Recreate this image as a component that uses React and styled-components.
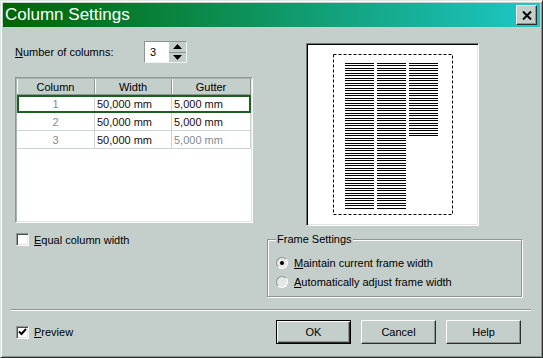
import React from "react";
import styled, { createGlobalStyle } from "styled-components";

const face = "#c4cecb";
const shadow = "#8c9693";
const dark = "#2b2f2e";

const GlobalStyle = createGlobalStyle`
  html, body {
    margin: 0;
    padding: 0;
    background: ${face};
  }
  body {
    font-family: "Liberation Sans", Arial, sans-serif;
    font-size: 11px;
    color: #000;
  }
`;

const Window = styled.div`
  width: 543px;
  height: 358px;
  box-sizing: border-box;
  background: ${face};
  border: 1px solid;
  border-color: #dfe6e3 ${dark} ${dark} #dfe6e3;
  box-shadow: inset 1px 1px 0 #fff, inset -1px -1px 0 ${shadow};
  padding: 2px;
  display: flex;
  flex-direction: column;
`;

const TitleBar = styled.div`
  height: 24px;
  flex: none;
  display: flex;
  align-items: center;
  justify-content: space-between;
  padding: 0 3px 0 2px;
  background: linear-gradient(90deg, #006400 0%, #1ec8c8 100%);
`;

const Title = styled.span`
  color: #fff;
  font-size: 17px;
  line-height: 24px;
`;

const CloseButton = styled.div`
  width: 21px;
  height: 20px;
  box-sizing: border-box;
  background: ${face};
  border: 1px solid;
  border-color: #fff ${dark} ${dark} #fff;
  box-shadow: inset -1px -1px 0 ${shadow};
  display: flex;
  align-items: center;
  justify-content: center;
`;

const Main = styled.div`
  height: 282px;
  box-sizing: border-box;
  padding: 14px 0 0 12px;
  display: grid;
  grid-template-columns: 238px 255px;
  column-gap: 14px;
  align-items: start;
`;

const Column = styled.div`
  display: flex;
  flex-direction: column;
`;

const NumberRow = styled.div`
  height: 22px;
  display: flex;
  align-items: center;
`;

const FieldLabel = styled.span`
  width: 129px;
`;

const U = styled.span`
  text-decoration: underline;
`;

const Spinner = styled.div`
  width: 43px;
  height: 22px;
  box-sizing: border-box;
  display: flex;
  border: 1px solid;
  border-color: ${shadow} #eef2f0 #eef2f0 ${shadow};
`;

const SpinField = styled.div`
  width: 24px;
  background: #fff;
  padding-left: 5px;
  box-sizing: border-box;
  display: flex;
  align-items: center;
`;

const SpinArrows = styled.div`
  flex: 1;
  display: flex;
  flex-direction: column;
  background: ${face};
`;

const SpinHalf = styled.div`
  flex: 1;
  display: flex;
  align-items: center;
  justify-content: center;
  border-bottom: ${(p) => (p.$top ? `1px solid ${shadow}` : "none")};
`;

const Table = styled.div`
  margin-top: 14px;
  width: 238px;
  height: 146px;
  box-sizing: border-box;
  background: #fff;
  border: 1px solid;
  border-color: ${shadow} #fff #fff ${shadow};
  box-shadow: inset 1px 1px 0 #aab4b1, inset -1px -1px 0 #dfe6e3;
  padding: 1px;
`;

const Row = styled.div`
  display: grid;
  grid-template-columns: 78px 77px 79px;
  height: ${(p) => (p.$header ? "16px" : "18px")};
  outline: ${(p) => (p.$selected ? "2px solid #1f5f22" : "none")};
  outline-offset: -2px;
`;

const HeadCell = styled.div`
  background: ${face};
  border-right: 1px solid ${shadow};
  border-bottom: 1px solid ${shadow};
  box-shadow: inset 1px 0 0 #fff;
  display: flex;
  align-items: center;
  justify-content: center;
`;

const Cell = styled.div`
  border-right: 1px solid #cdd5d2;
  border-bottom: 1px solid #cdd5d2;
  display: flex;
  align-items: center;
  justify-content: ${(p) => (p.$center ? "center" : "flex-start")};
  padding-left: ${(p) => (p.$center ? "0" : "2px")};
  color: ${(p) => (p.$muted ? "#838d8a" : "#1c0c0c")};
`;

const CheckRow = styled.label`
  display: flex;
  align-items: center;
  gap: 5px;
  margin-top: ${(p) => p.$top || 0}px;
  margin-left: 1px;
`;

const Box = styled.span`
  width: 13px;
  height: 13px;
  box-sizing: border-box;
  background: #fff;
  border: 1px solid;
  border-color: ${shadow} #fff #fff ${shadow};
  box-shadow: inset 1px 1px 0 #4a4f4e, inset -1px -1px 0 #dfe6e3;
  display: flex;
  align-items: center;
  justify-content: center;
`;

const PreviewFrame = styled.div`
  margin: 2px 0 0 39px;
  width: 173px;
  height: 183px;
  box-sizing: border-box;
  background: #fff;
  border: 1px solid;
  border-color: #6f7a77 #fff #fff #6f7a77;
  box-shadow: inset 1px 1px 0 #000, inset -1px -1px 0 #dfe6e3;
  padding: 1px;
`;

const GroupBox = styled.fieldset`
  margin: 7px 0 0 0;
  width: 255px;
  box-sizing: border-box;
  border: 1px solid ${shadow};
  box-shadow: inset 1px 1px 0 #fff, 1px 1px 0 #fff;
  padding: 7px 0 5px 8px;
  min-inline-size: 0;
`;

const Legend = styled.legend`
  padding: 0 1px;
  line-height: 13px;
  background: ${face};
`;

const RadioRow = styled.label`
  height: 19px;
  display: flex;
  align-items: center;
  gap: 6px;
`;

const Radio = styled.span`
  width: 12px;
  height: 12px;
  box-sizing: border-box;
  border-radius: 50%;
  background: #e3e8e6;
  border: 1px solid;
  border-color: ${shadow} #fff #fff ${shadow};
  display: flex;
  align-items: center;
  justify-content: center;
  &::after {
    content: "";
    width: 4px;
    height: 4px;
    border-radius: 50%;
    background: ${(p) => (p.$checked ? "#000" : "transparent")};
  }
`;

const Separator = styled.div`
  margin: 0 9px 0 8px;
  border-top: 1px solid ${shadow};
  border-bottom: 1px solid #fff;
`;

const Footer = styled.div`
  display: flex;
  align-items: center;
  padding: 9px 19px 0 12px;
  height: 24px;
`;

const Buttons = styled.div`
  margin-left: auto;
  display: flex;
  gap: 10px;
`;

const Button = styled.div`
  width: 75px;
  height: 24px;
  box-sizing: border-box;
  display: flex;
  align-items: center;
  justify-content: center;
  background: ${face};
  border: 1px solid;
  border-color: ${(p) => (p.$default ? "#000" : `#fff ${dark} ${dark} #fff`)};
  box-shadow: ${(p) =>
    p.$default
      ? `inset 1px 1px 0 #fff, inset -1px -1px 0 ${dark}, inset -2px -2px 0 ${shadow}`
      : `inset -1px -1px 0 ${shadow}`};
`;

const rows = [
  { n: 1, w: "50,000 mm", g: "5,000 mm" },
  { n: 2, w: "50,000 mm", g: "5,000 mm" },
  { n: 3, w: "50,000 mm", g: "5,000 mm", mutedGutter: true },
];

const Lines = ({ x, y0, y1 }) => {
  const out = [];
  for (let i = 0; ; i++) {
    const y = y0 + Math.floor(i * 2.5);
    if (y > y1) break;
    out.push(<rect key={i} x={x} y={y} width="29" height="1" fill="#000" />);
  }
  return out;
};

const PagePreview = () => (
  <svg width="169" height="179" viewBox="0 0 169 179">
    <rect
      x="25.5"
      y="9.5"
      width="119"
      height="160"
      fill="none"
      stroke="#000"
      strokeDasharray="3 2"
    />
    <Lines x={37} y0={18} y1={163} />
    <Lines x={69} y0={18} y1={163} />
    <Lines x={101} y0={18} y1={90} />
  </svg>
);

const App = () => (
  <Window>
    <GlobalStyle />
    <TitleBar>
      <Title>Column Settings</Title>
      <CloseButton>
        <svg width="10" height="9" viewBox="0 0 10 9">
          <path d="M1 0.5 L9 8.5 M9 0.5 L1 8.5" stroke="#000" strokeWidth="2" />
        </svg>
      </CloseButton>
    </TitleBar>
    <Main>
      <Column>
        <NumberRow>
          <FieldLabel>
            <U>N</U>umber of columns:
          </FieldLabel>
          <Spinner>
            <SpinField>3</SpinField>
            <SpinArrows>
              <SpinHalf $top>
                <svg width="9" height="5" viewBox="0 0 9 5">
                  <path d="M4.5 0 L9 5 L0 5 Z" fill="#000" />
                </svg>
              </SpinHalf>
              <SpinHalf>
                <svg width="9" height="5" viewBox="0 0 9 5">
                  <path d="M0 0 L9 0 L4.5 5 Z" fill="#000" />
                </svg>
              </SpinHalf>
            </SpinArrows>
          </Spinner>
        </NumberRow>
        <Table>
          <Row $header>
            <HeadCell>Column</HeadCell>
            <HeadCell>Width</HeadCell>
            <HeadCell>Gutter</HeadCell>
          </Row>
          {rows.map((r) => (
            <Row key={r.n} $selected={r.n === 1}>
              <Cell $center $muted>
                {r.n}
              </Cell>
              <Cell>{r.w}</Cell>
              <Cell $muted={r.mutedGutter}>{r.g}</Cell>
            </Row>
          ))}
        </Table>
        <CheckRow $top={10}>
          <Box />
          <span>
            <U>E</U>qual column width
          </span>
        </CheckRow>
      </Column>
      <Column>
        <PreviewFrame>
          <PagePreview />
        </PreviewFrame>
        <GroupBox>
          <Legend>Frame Settings</Legend>
          <RadioRow>
            <Radio $checked />
            <span>
              <U>M</U>aintain current frame width
            </span>
          </RadioRow>
          <RadioRow>
            <Radio />
            <span>
              <U>A</U>utomatically adjust frame width
            </span>
          </RadioRow>
        </GroupBox>
      </Column>
    </Main>
    <Separator />
    <Footer>
      <CheckRow>
        <Box>
          <svg width="9" height="8" viewBox="0 0 9 8">
            <path d="M1 3.5 L3.5 6 L8 1" stroke="#000" strokeWidth="2" fill="none" />
          </svg>
        </Box>
        <span>
          <U>P</U>review
        </span>
      </CheckRow>
      <Buttons>
        <Button $default>OK</Button>
        <Button>Cancel</Button>
        <Button>Help</Button>
      </Buttons>
    </Footer>
  </Window>
);

export default App;
